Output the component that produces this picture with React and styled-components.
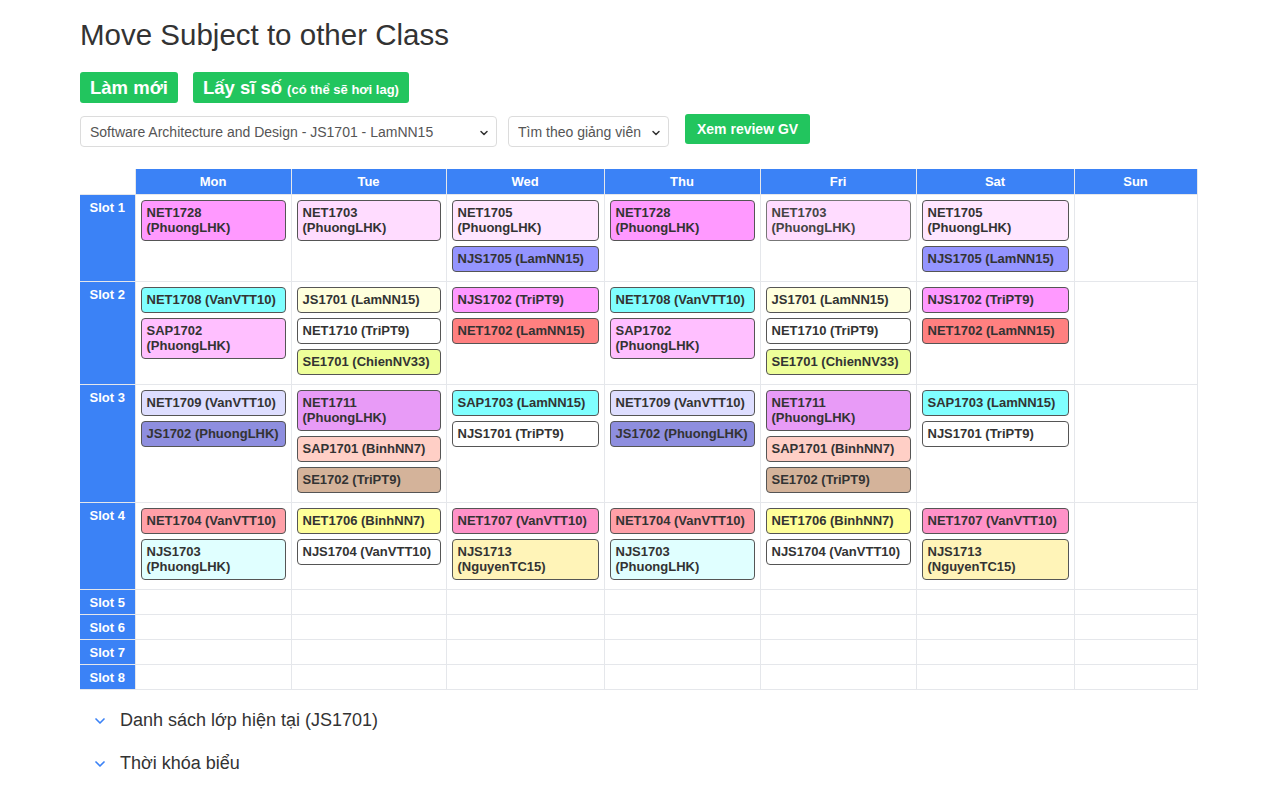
import React from 'react'
import styled, { createGlobalStyle } from 'styled-components'
import { ChevronDown } from 'lucide-react'

const GlobalStyle = createGlobalStyle`
  body {
    margin: 0;
    background: #fff;
    font-family: "Liberation Sans", Arial, sans-serif;
    color: #333;
  }
`

const days = ['Mon', 'Tue', 'Wed', 'Thu', 'Fri', 'Sat', 'Sun']
const colWidths = [55, 156, 155, 158, 156, 156, 158, 123]

const c = (name, bg, dim) => ({ name, bg, dim })

const monThu = [
  [c('NET1728 (PhuongLHK)', '#ff99ff')],
  [c('NET1708 (VanVTT10)', '#80ffff'), c('SAP1702 (PhuongLHK)', '#ffbfff')],
  [c('NET1709 (VanVTT10)', '#dedeff'), c('JS1702 (PhuongLHK)', '#8e8edf')],
  [c('NET1704 (VanVTT10)', '#ffa0a8'), c('NJS1703 (PhuongLHK)', '#e0ffff')],
]
const tueFri = [
  [c('NET1703 (PhuongLHK)', '#ffdcff')],
  [c('JS1701 (LamNN15)', '#ffffdd'), c('NET1710 (TriPT9)', '#ffffff'), c('SE1701 (ChienNV33)', '#eeff99')],
  [c('NET1711 (PhuongLHK)', '#e89bf7'), c('SAP1701 (BinhNN7)', '#ffcfc6'), c('SE1702 (TriPT9)', '#d4b39a')],
  [c('NET1706 (BinhNN7)', '#ffff99'), c('NJS1704 (VanVTT10)', '#ffffff')],
]
const wedSat = [
  [c('NET1705 (PhuongLHK)', '#ffe6ff'), c('NJS1705 (LamNN15)', '#9494ff')],
  [c('NJS1702 (TriPT9)', '#ff99ff'), c('NET1702 (LamNN15)', '#ff8080')],
  [c('SAP1703 (LamNN15)', '#80ffff'), c('NJS1701 (TriPT9)', '#ffffff')],
  [c('NET1707 (VanVTT10)', '#ff92c8'), c('NJS1713 (NguyenTC15)', '#fff4b8')],
]

const schedule = [0, 1, 2, 3].map((s) => [
  monThu[s],
  tueFri[s],
  wedSat[s],
  monThu[s],
  s === 0 ? [c('NET1703 (PhuongLHK)', '#ffdcff', true)] : tueFri[s],
  wedSat[s],
  [],
])

const Page = styled.div`
  padding: 16px 0 40px 80px;
  width: 1117px;
`

const Title = styled.h1`
  margin: 0 0 18px;
  font-size: 29.5px;
  font-weight: 400;
  line-height: 38px;
  color: #333;
`

const ButtonRow = styled.div`
  display: flex;
  gap: 15px;
  margin-bottom: 13px;
`

const GreenButton = styled.button`
  display: flex;
  align-items: center;
  gap: 5px;
  height: ${(p) => (p.$small ? 30 : 31)}px;
  padding: 0 ${(p) => (p.$small ? 12 : 10)}px;
  border: none;
  border-radius: 3px;
  background: #22c55e;
  color: #fff;
  font-family: "Liberation Sans", Arial, sans-serif;
  font-weight: 700;
  font-size: ${(p) => (p.$small ? 14 : 18.5)}px;
  cursor: pointer;
  small {
    font-size: 13px;
    font-weight: 700;
    padding-top: 3px;
  }
`

const FilterRow = styled.div`
  display: flex;
  align-items: flex-start;
  gap: 11px;
  margin-bottom: 22px;
  ${GreenButton} {
    margin-left: 5px;
    margin-top: -2px;
  }
`

const SelectWrap = styled.div`
  position: relative;
  width: ${(p) => p.$width}px;
  svg {
    position: absolute;
    right: 7px;
    top: 11px;
    pointer-events: none;
    color: #333;
  }
`

const Select = styled.select`
  appearance: none;
  width: 100%;
  height: 31px;
  padding: 0 24px 0 9px;
  border: 1px solid #dcdcdc;
  border-radius: 4px;
  background: #fff;
  font-family: "Liberation Sans", Arial, sans-serif;
  font-size: 14px;
  color: #555;
`

const Table = styled.table`
  border-collapse: collapse;
  table-layout: fixed;
  width: 1117px;
  font-size: 13px;
  line-height: 15px;
`

const DayHead = styled.th`
  background: #3b82f6;
  color: #fff;
  font-weight: 700;
  height: 25px;
  padding: 0;
  border: 1px solid #e5e7eb;
  border-top: none;
`

const Corner = styled.th`
  padding: 0;
  border: none;
  border-bottom: 1px solid #e5e7eb;
`

const SlotCell = styled.td`
  background: #3b82f6;
  color: #fff;
  font-weight: 700;
  text-align: center;
  vertical-align: top;
  padding: 5px 0 4px;
  border: 1px solid #e5e7eb;
  border-left: none;
`

const DayCell = styled.td`
  vertical-align: top;
  padding: ${(p) => (p.$filled ? '5px 5px 9px' : '0')};
  border: 1px solid #e5e7eb;
`

const CardStack = styled.div`
  display: flex;
  flex-direction: column;
  gap: 5px;
`

const Card = styled.div`
  background: ${(p) => p.$bg};
  border: 1px solid ${(p) => (p.$dim ? '#777' : '#555')};
  border-radius: 4px;
  padding: 4px 5px 5px;
  font-weight: 700;
  color: ${(p) => (p.$dim ? '#444' : '#333')};
  line-height: 15px;
`

const Section = styled.div`
  display: flex;
  align-items: center;
  gap: 12px;
  padding-left: 12px;
  margin-top: ${(p) => (p.$first ? 20 : 22)}px;
  font-size: 18px;
  color: #333;
  svg {
    color: #3b82f6;
  }
`

export default function App() {
  return (
    <Page>
      <GlobalStyle />
      <Title>Move Subject to other Class</Title>
      <ButtonRow>
        <GreenButton>Làm mới</GreenButton>
        <GreenButton>
          Lấy sĩ số <small>(có thể sẽ hơi lag)</small>
        </GreenButton>
      </ButtonRow>
      <FilterRow>
        <SelectWrap $width={417}>
          <Select defaultValue="js1701">
            <option value="js1701">Software Architecture and Design - JS1701 - LamNN15</option>
          </Select>
          <ChevronDown size={12} strokeWidth={3} />
        </SelectWrap>
        <SelectWrap $width={161}>
          <Select defaultValue="gv">
            <option value="gv">Tìm theo giảng viên</option>
          </Select>
          <ChevronDown size={12} strokeWidth={3} />
        </SelectWrap>
        <GreenButton $small>Xem review GV</GreenButton>
      </FilterRow>
      <Table>
        <colgroup>
          {colWidths.map((w, i) => (
            <col key={i} style={{ width: w }} />
          ))}
        </colgroup>
        <thead>
          <tr>
            <Corner />
            {days.map((d) => (
              <DayHead key={d}>{d}</DayHead>
            ))}
          </tr>
        </thead>
        <tbody>
          {Array.from({ length: 8 }, (_, s) => (
            <tr key={s}>
              <SlotCell>Slot {s + 1}</SlotCell>
              {days.map((d, di) => {
                const cards = (schedule[s] && schedule[s][di]) || []
                return (
                  <DayCell key={d} $filled={cards.length > 0}>
                    {cards.length > 0 && (
                      <CardStack>
                        {cards.map((card) => (
                          <Card key={card.name} $bg={card.bg} $dim={card.dim}>
                            {card.name}
                          </Card>
                        ))}
                      </CardStack>
                    )}
                  </DayCell>
                )
              })}
            </tr>
          ))}
        </tbody>
      </Table>
      <Section $first>
        <ChevronDown size={16} strokeWidth={2.5} />
        Danh sách lớp hiện tại (JS1701)
      </Section>
      <Section>
        <ChevronDown size={16} strokeWidth={2.5} />
        Thời khóa biểu
      </Section>
    </Page>
  )
}
